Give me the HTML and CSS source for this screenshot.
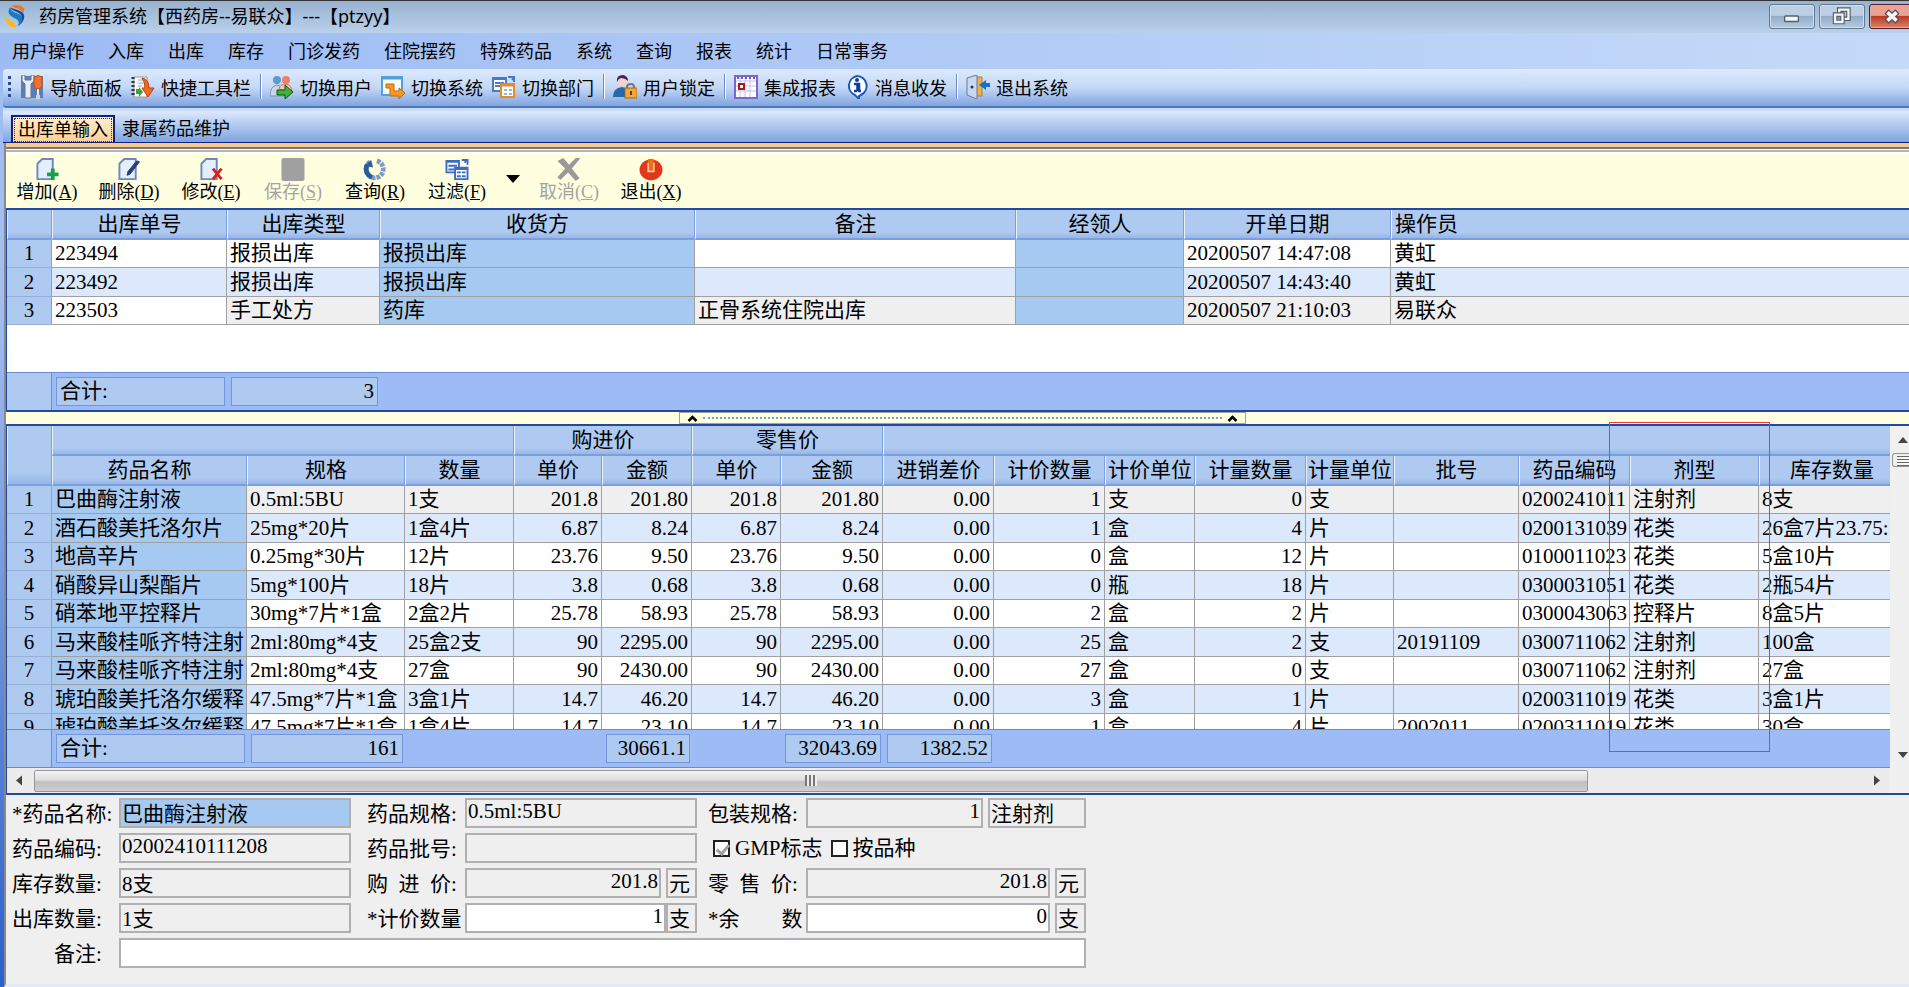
FILE: index.html
```html
<!DOCTYPE html>
<html lang="zh-CN">
<head>
    <meta charset="UTF-8">
    <meta name="viewport" content="width=device-width, initial-scale=1.0">
    <title>药房管理系统</title>
    <link rel="stylesheet" href="styles.css">
</head>
<body>
    <header class="titlebar">
        <svg class="logo" viewBox="0 0 24 28">
            <path d="M7 3C12 0 18 1 22 5l-1 5C17 5 12 4 7 3z" fill="#f07818"/>
            <path d="M6 4c-4 5-1 9 5 12 5 2 6 5 3 9 8-4 9-9 3-13C11 9 7 9 6 4z" fill="#1a78c4"/>
            <path d="M6 4c2 4 8 4 12 8 2 3 2 6 0 9 5-4 5-9 1-12C15 6 10 6 6 4z" fill="#0c4f96"/>
            <path d="M1 13c2 6 12 6 11 13C5 27 0 20 1 13z" fill="#fdb813"/>
        </svg>
        <h1>药房管理系统【西药房--易联众】---【ptzyy】</h1>
        <div class="window-buttons">
            <button type="button" aria-label="最小化">
                <svg viewBox="0 0 46 25"><rect x="15" y="12" width="15" height="6" rx="1" fill="#f4f4f4" stroke="#56606e" stroke-width="1.5"/></svg>
            </button>
            <button type="button" aria-label="还原">
                <svg viewBox="0 0 46 25">
                    <path d="M20 5h10v10H20z" fill="none" stroke="#56606e" stroke-width="5"/>
                    <path d="M20 5h10v10H20z" fill="none" stroke="#f4f4f4" stroke-width="2.5"/>
                    <path d="M15.500 10.500h8v8h-8z" fill="#7f9dbb" stroke="#56606e" stroke-width="5"/>
                    <path d="M15.500 10.500h8v8h-8z" fill="none" stroke="#f4f4f4" stroke-width="2.500"/>
                </svg>
            </button>
            <button type="button" class="close" aria-label="关闭">
                <svg viewBox="0 0 46 25">
                    <path d="M17 7l12 11M29 7L17 18" stroke="#5c4a58" stroke-width="6.500"/>
                    <path d="M18 8l10 9M28 8l-10 9" stroke="#f4f4f4" stroke-width="4"/>
                </svg>
            </button>
        </div>
    </header>

    <nav class="menubar">
        <a href="#">用户操作</a>
        <a href="#">入库</a>
        <a href="#">出库</a>
        <a href="#">库存</a>
        <a href="#">门诊发药</a>
        <a href="#">住院摆药</a>
        <a href="#">特殊药品</a>
        <a href="#">系统</a>
        <a href="#">查询</a>
        <a href="#">报表</a>
        <a href="#">统计</a>
        <a href="#">日常事务</a>
    </nav>

    <div class="toolbar">
        <span class="grip"></span>
        <button type="button">
            <svg viewBox="0 0 24 24">
                <rect x="1" y="1" width="22" height="22" fill="#5b7fb4"/>
                <path d="M2 0v6l3 3v14h6V9l3-3V0h-3v5H5V0z" fill="#e8edf3" stroke="#66748a"/>
                <path d="M14 2q4-3 8 0v9q-1 3-4 3t-4-3z" fill="#f07030" stroke="#c84818"/>
                <path d="M17 14h2v6h-2z" fill="#eee"/><path d="M16 20h4v4h-4z" fill="#ccd4e0"/>
            </svg>
            导航面板
        </button>
        <button type="button">
            <svg viewBox="0 0 24 24">
                <path d="M3 2h13v20H3z" fill="#fbfbfb" stroke="#999"/>
                <path d="M2 2v20" stroke="#333" stroke-width="3" stroke-dasharray="2 2"/>
                <path d="M7 5h6M7 8h6M7 11h4" stroke="#9ab" />
                <path d="M11 3q7 1 7 10h5l-6 9-6-9h3q0-6-3-10z" fill="#f06a20" stroke="#b84410"/>
                <path d="M5 14h3v-2l4 5-4 5v-3H5z" fill="#3fa03c"/>
            </svg>
            快捷工具栏
        </button>
        <span class="sep"></span>
        <button type="button">
            <svg viewBox="0 0 24 24">
                <circle cx="7" cy="5" r="4" fill="#5a9bd0"/><circle cx="16" cy="5" r="4" fill="#ec8068"/>
                <path d="M0 21q0-10 7-11 7 1 7 11z" fill="#c8d8ea" stroke="#7890b0"/>
                <path d="M9 14q1-5 7-5 6 1 6 8z" fill="#f5c8b0" stroke="#c87858"/>
                <path d="M7 15h8v-5l8 7-8 7v-4H7z" fill="#42b03c" stroke="#14500e"/>
            </svg>
            切换用户
        </button>
        <button type="button">
            <svg viewBox="0 0 24 24">
                <rect x="1" y="2" width="20" height="18" fill="#f6fbff" stroke="#52a0dc" stroke-width="2"/>
                <path d="M1 3h20" stroke="#52a0dc" stroke-width="3"/>
                <path d="M5 9h8v7h5v-3l6 5-6 6v-3H9v-8H5z" fill="#f89820" stroke="#c06808"/>
            </svg>
            切换系统
        </button>
        <button type="button">
            <svg viewBox="0 0 24 24">
                <rect x="1" y="3" width="13" height="13" fill="#fff" stroke="#4a78d0" stroke-width="2"/>
                <path d="M1 4h13M3 8h9M3 11h9" stroke="#4a78d0" stroke-width="2"/>
                <path d="M16 2h6v5M20 5l2-3" stroke="#4a78d0" stroke-width="2" fill="none"/>
                <rect x="9" y="9" width="13" height="13" fill="#fff" stroke="#e88a28" stroke-width="2"/>
                <path d="M9 10h13" stroke="#e88a28" stroke-width="3"/>
                <path d="M12 15h8M12 19h8" stroke="#98b8e0" stroke-width="2" stroke-dasharray="3 2"/>
            </svg>
            切换部门
        </button>
        <span class="sep"></span>
        <button type="button">
            <svg viewBox="0 0 24 24">
                <circle cx="9" cy="6" r="5" fill="#f4d4cc"/>
                <path d="M4 7q-1-7 6-7 5 1 5 6-3-3-7-3-3 1-4 4z" fill="#4a2060"/>
                <path d="M0 22q0-9 9-10 8 1 8 10z" fill="#2868a8"/>
                <path d="M14 14v-2q0-3 4-3 3 0 3 3v2" fill="none" stroke="#777" stroke-width="2"/>
                <rect x="12" y="13" width="12" height="10" fill="#f0a838" stroke="#a86810"/>
                <path d="M18 16v4" stroke="#6a3c00" stroke-width="2"/>
            </svg>
            用户锁定
        </button>
        <span class="sep"></span>
        <button type="button">
            <svg viewBox="0 0 24 24">
                <rect x="1" y="1" width="22" height="22" fill="#fff" stroke="#7868d0" stroke-width="2"/>
                <path d="M2 6h20M2 11h20M2 16h20M6 2v20M11 2v20M16 2v20" stroke="#c4c0f0"/>
                <path d="M3 3h18" stroke="#6858c8" stroke-width="2" stroke-dasharray="2 2"/>
                <rect x="5" y="9" width="5" height="5" fill="#fff" stroke="#b01818" stroke-width="2"/>
            </svg>
            集成报表
        </button>
        <button type="button">
            <svg viewBox="0 0 24 24">
                <path d="M12 1a10 10 0 0 1 4 19l-2 1v3l-4-4A10 10 0 0 1 12 1z" fill="#fff" stroke="#1c58b8" stroke-width="2"/>
                <circle cx="12" cy="5" r="2" fill="#123c9c"/>
                <path d="M9 9h5v7h2M9 16h3M12.500 9v7" stroke="#123c9c" stroke-width="2.500" fill="none"/>
            </svg>
            消息收发
        </button>
        <span class="sep"></span>
        <button type="button">
            <svg viewBox="0 0 24 24">
                <path d="M9 2h7v19H9z" fill="#f0b040" stroke="#a88030"/>
                <path d="M1 3l10-3v24L1 20z" fill="#c8d8f0" stroke="#6878a0"/>
                <circle cx="6" cy="12" r="1.500" fill="#334"/>
                <path d="M24 8h-4V5l-7 5 7 5v-3h4z" fill="#1070e0"/>
            </svg>
            退出系统
        </button>
    </div>

    <div class="tabs">
        <button type="button" class="tab active"><span>出库单输入</span></button>
        <button type="button" class="tab">隶属药品维护</button>
    </div>

    <main class="workspace">
        <div class="actions">
            <button type="button">
                <svg viewBox="0 0 24 24">
                    <path d="M2 6l5-5h11v21H2z" fill="#e4eefc" stroke="#6c88bc" stroke-width="2"/>
                    <path d="M12 17h12M18 11v12" stroke="#18a04c" stroke-width="4"/>
                </svg>
                <span>增加(<u>A</u>)</span>
            </button>
            <button type="button">
                <svg viewBox="0 0 24 24">
                    <path d="M2 6l5-5h12v21H2z" fill="#e4eefc" stroke="#6c88bc" stroke-width="2"/>
                    <path d="M23 4L13 17l-3 1 1-4L20 3z" fill="#2c3c78" stroke="#2c3c78"/>
                </svg>
                <span>删除(<u>D</u>)</span>
            </button>
            <button type="button">
                <svg viewBox="0 0 24 24">
                    <path d="M2 6l5-5h11v21H2z" fill="#e4eefc" stroke="#6c88bc" stroke-width="2"/>
                    <path d="M14 11l9 11M23 11l-9 11" stroke="#d82020" stroke-width="3"/>
                </svg>
                <span>修改(<u>E</u>)</span>
            </button>
            <button type="button" disabled>
                <svg viewBox="0 0 24 24"><rect x="0" y="0" width="24" height="24" rx="2" fill="#a0a0a0"/></svg>
                <span>保存(<u>S</u>)</span>
            </button>
            <button type="button">
                <svg viewBox="0 0 24 24">
                    <path d="M7 4a9 9 0 1 0 7-1" fill="none" stroke="#7c9cc8" stroke-width="5" stroke-dasharray="4 1"/>
                    <path d="M4 7a9 9 0 0 0 5 13" fill="none" stroke="#2c5c9c" stroke-width="5"/>
                    <path d="M1 8l7-6 2 8z" fill="#2c5c9c"/>
                </svg>
                <span>查询(<u>R</u>)</span>
            </button>
            <button type="button">
                <svg viewBox="0 0 24 24">
                    <path d="M1 3h13v12H1z" fill="#fff" stroke="#3c6cc8" stroke-width="2"/>
                    <path d="M1 4h13M3 8h9M3 12h6" stroke="#3c6cc8" stroke-width="2"/>
                    <path d="M17 2h6v5M20 5l2-3" stroke="#3c6cc8" stroke-width="2" fill="none"/>
                    <path d="M10 10h13v12H10z" fill="#fff" stroke="#3c6cc8" stroke-width="2"/>
                    <path d="M10 11h13" stroke="#3c6cc8" stroke-width="3"/>
                    <path d="M12 15h9M12 19h9" stroke="#3c6cc8" stroke-width="2" stroke-dasharray="4 1"/>
                </svg>
                <span>过滤(<u>F</u>)</span>
            </button>
            <button type="button" class="more" aria-label="更多过滤">
                <svg viewBox="0 0 14 8"><path d="M0 0h14L7 8z" fill="#000"/></svg>
            </button>
            <button type="button" disabled>
                <svg viewBox="0 0 24 24"><path d="M0 3l6-3 6 7 7-7h5l-9 11 8 10-4 3-8-9-8 8-3-3 8-9z" fill="#999"/></svg>
                <span>取消(<u>C</u>)</span>
            </button>
            <button type="button">
                <svg viewBox="0 0 24 24">
                    <path d="M8 2A12 11 0 1 0 16 2z" fill="#e03818"/>
                    <path d="M9 1h6v13H9z" fill="#f07010"/>
                    <path d="M9 5v9h6V5" fill="none" stroke="#fbd8c8" stroke-width="1.500"/>
                </svg>
                <span>退出(<u>X</u>)</span>
            </button>
        </div>

        <section class="grid-panel orders">
            <div class="grid-body">
                <table class="grid">
                    <colgroup>
                        <col class="w45"><col class="w175"><col class="w153"><col class="w315"><col class="w321"><col class="w168"><col class="w207"><col>
                    </colgroup>
                    <thead>
                        <tr><th></th><th>出库单号</th><th>出库类型</th><th>收货方</th><th>备注</th><th>经领人</th><th>开单日期</th><th class="left">操作员</th></tr>
                    </thead>
                    <tbody>
                        <tr><th>1</th><td>223494</td><td>报损出库</td><td class="key">报损出库</td><td></td><td class="key"></td><td>20200507 14:47:08</td><td>黄虹</td></tr>
                        <tr><th>2</th><td>223492</td><td>报损出库</td><td class="key">报损出库</td><td></td><td class="key"></td><td>20200507 14:43:40</td><td>黄虹</td></tr>
                        <tr class="current"><th>3</th><td class="edit">223503</td><td>手工处方</td><td class="key">药库</td><td>正骨系统住院出库</td><td class="key"></td><td>20200507 21:10:03</td><td>易联众</td></tr>
                    </tbody>
                </table>
            </div>
            <div class="totals">
                <span class="corner w45"></span>
                <span class="total w175"><b>合计:</b></span>
                <span class="total num w153"><b>3</b></span>
            </div>
        </section>

        <div class="splitter">
            <button type="button" aria-label="折叠">
                <svg viewBox="0 0 10 7"><path d="M1 6l4-4 4 4" fill="none" stroke="#000" stroke-width="2.500"/></svg>
                <i></i>
                <svg viewBox="0 0 10 7"><path d="M1 6l4-4 4 4" fill="none" stroke="#000" stroke-width="2.500"/></svg>
            </button>
        </div>

        <section class="grid-panel details">
            <div class="details-main">
                <div class="grid-body">
                    <table class="grid">
                        <colgroup>
                            <col class="w45"><col class="w195"><col class="w158"><col class="w109"><col class="w88"><col class="w90"><col class="w89"><col class="w102"><col class="w111"><col class="w111"><col class="w90"><col class="w111"><col class="w88"><col class="w125"><col class="w111"><col class="w129"><col>
                        </colgroup>
                        <thead>
                            <tr><th rowspan="2"></th><th colspan="3"></th><th colspan="2">购进价</th><th colspan="2">零售价</th><th colspan="9"></th></tr>
                            <tr><th>药品名称</th><th>规格</th><th>数量</th><th>单价</th><th>金额</th><th>单价</th><th>金额</th><th>进销差价</th><th>计价数量</th><th>计价单位</th><th>计量数量</th><th>计量单位</th><th>批号</th><th>药品编码</th><th>剂型</th><th class="partial">库存数量</th></tr>
                        </thead>
                        <tbody>
                            <tr class="current"><th>1</th><td class="key">巴曲酶注射液</td><td>0.5ml:5BU</td><td>1支</td><td class="num">201.8</td><td class="num">201.80</td><td class="num">201.8</td><td class="num">201.80</td><td class="num">0.00</td><td class="num">1</td><td>支</td><td class="num">0</td><td>支</td><td></td><td>0200241011</td><td>注射剂</td><td>8支</td></tr>
                            <tr><th>2</th><td class="key">酒石酸美托洛尔片</td><td>25mg*20片</td><td>1盒4片</td><td class="num">6.87</td><td class="num">8.24</td><td class="num">6.87</td><td class="num">8.24</td><td class="num">0.00</td><td class="num">1</td><td>盒</td><td class="num">4</td><td>片</td><td></td><td>0200131039</td><td>花类</td><td>26盒7片23.75:</td></tr>
                            <tr><th>3</th><td class="key">地高辛片</td><td>0.25mg*30片</td><td>12片</td><td class="num">23.76</td><td class="num">9.50</td><td class="num">23.76</td><td class="num">9.50</td><td class="num">0.00</td><td class="num">0</td><td>盒</td><td class="num">12</td><td>片</td><td></td><td>0100011023</td><td>花类</td><td>5盒10片</td></tr>
                            <tr><th>4</th><td class="key">硝酸异山梨酯片</td><td>5mg*100片</td><td>18片</td><td class="num">3.8</td><td class="num">0.68</td><td class="num">3.8</td><td class="num">0.68</td><td class="num">0.00</td><td class="num">0</td><td>瓶</td><td class="num">18</td><td>片</td><td></td><td>0300031051</td><td>花类</td><td>2瓶54片</td></tr>
                            <tr><th>5</th><td class="key">硝苯地平控释片</td><td>30mg*7片*1盒</td><td>2盒2片</td><td class="num">25.78</td><td class="num">58.93</td><td class="num">25.78</td><td class="num">58.93</td><td class="num">0.00</td><td class="num">2</td><td>盒</td><td class="num">2</td><td>片</td><td></td><td>0300043063</td><td>控释片</td><td>8盒5片</td></tr>
                            <tr><th>6</th><td class="key">马来酸桂哌齐特注射</td><td>2ml:80mg*4支</td><td>25盒2支</td><td class="num">90</td><td class="num">2295.00</td><td class="num">90</td><td class="num">2295.00</td><td class="num">0.00</td><td class="num">25</td><td>盒</td><td class="num">2</td><td>支</td><td>20191109</td><td>0300711062</td><td>注射剂</td><td>100盒</td></tr>
                            <tr><th>7</th><td class="key">马来酸桂哌齐特注射</td><td>2ml:80mg*4支</td><td>27盒</td><td class="num">90</td><td class="num">2430.00</td><td class="num">90</td><td class="num">2430.00</td><td class="num">0.00</td><td class="num">27</td><td>盒</td><td class="num">0</td><td>支</td><td></td><td>0300711062</td><td>注射剂</td><td>27盒</td></tr>
                            <tr><th>8</th><td class="key">琥珀酸美托洛尔缓释</td><td>47.5mg*7片*1盒</td><td>3盒1片</td><td class="num">14.7</td><td class="num">46.20</td><td class="num">14.7</td><td class="num">46.20</td><td class="num">0.00</td><td class="num">3</td><td>盒</td><td class="num">1</td><td>片</td><td></td><td>0200311019</td><td>花类</td><td>3盒1片</td></tr>
                            <tr><th>9</th><td class="key">琥珀酸美托洛尔缓释</td><td>47.5mg*7片*1盒</td><td>1盒4片</td><td class="num">14.7</td><td class="num">23.10</td><td class="num">14.7</td><td class="num">23.10</td><td class="num">0.00</td><td class="num">1</td><td>盒</td><td class="num">4</td><td>片</td><td>2002011</td><td>0200311019</td><td>花类</td><td>30盒</td></tr>
                        </tbody>
                    </table>
                </div>
                <div class="totals">
                    <span class="corner w45"></span>
                    <span class="total w195"><b>合计:</b></span>
                    <span class="total num w158"><b>161</b></span>
                    <span class="w109"></span>
                    <span class="w88"></span>
                    <span class="total num w90"><b>30661.1</b></span>
                    <span class="w89"></span>
                    <span class="total num w102"><b>32043.69</b></span>
                    <span class="total num w111"><b>1382.52</b></span>
                </div>
                <div class="hscroll">
                    <svg viewBox="0 0 6 10"><path d="M6 0v10L0 5z" fill="#444"/></svg>
                    <div class="track"><div class="thumb"><i></i></div></div>
                    <svg viewBox="0 0 6 10"><path d="M0 0v10l6-5z" fill="#444"/></svg>
                </div>
            </div>
            <div class="vscroll">
                <svg viewBox="0 0 10 6"><path d="M0 6h10L5 0z" fill="#444"/></svg>
                <div class="thumb"></div>
                <svg viewBox="0 0 10 6"><path d="M0 0h10L5 6z" fill="#444"/></svg>
            </div>
            <div class="marker"></div>
        </section>

        <form class="editor">
            <label for="name">*药品名称:</label>
            <input id="name" class="key" value="巴曲酶注射液">
            <label for="spec" class="second">药品规格:</label>
            <input id="spec" value="0.5ml:5BU" readonly>
            <label for="pack" class="third">包装规格:</label>
            <div class="pair">
                <input id="pack" class="num" value="1" readonly>
                <input class="form-type" value="注射剂" aria-label="剂型" readonly>
            </div>

            <label for="code">药品编码:</label>
            <input id="code" value="02002410111208" readonly>
            <label for="batch" class="second">药品批号:</label>
            <input id="batch" value="" readonly>
            <div class="checks">
                <input type="checkbox" id="gmp" checked disabled><label for="gmp">GMP标志</label>
                <input type="checkbox" id="kind"><label for="kind">按品种</label>
            </div>

            <label for="stock">库存数量:</label>
            <input id="stock" value="8支" readonly>
            <label for="buy" class="second">购&ensp;进&ensp;价:</label>
            <div class="pair">
                <input id="buy" class="num" value="201.8" readonly>
                <input class="unit" value="元" aria-label="单位" readonly>
            </div>
            <label for="sell" class="third">零&ensp;售&ensp;价:</label>
            <div class="pair">
                <input id="sell" class="num" value="201.8" readonly>
                <input class="unit" value="元" aria-label="单位" readonly>
            </div>

            <label for="out">出库数量:</label>
            <input id="out" value="1支" readonly>
            <label for="qty" class="second">*计价数量</label>
            <div class="pair joined">
                <input id="qty" class="num" value="1">
                <input class="unit" value="支" aria-label="单位" readonly>
            </div>
            <label for="rest" class="third">*余&emsp;&emsp;数</label>
            <div class="pair">
                <input id="rest" class="num" value="0">
                <input class="unit" value="支" aria-label="单位" readonly>
            </div>

            <label for="memo" class="indent">备注:</label>
            <input id="memo" class="wide" value="">
        </form>
    </main>
</body>
</html>
```

FILE: styles.css
```css
:root {
    --song: "Liberation Serif", "Noto Sans CJK SC", serif;
    --ui: "Noto Sans", "Noto Sans CJK SC", sans-serif;
    --navy: #2348a0;
    --head: #aecaf0;
    --foot: #9dbbf4;
    --key: #a5c9f0;
    --line: #a0a0a0;
    --face: #efefef;
}

* {
    box-sizing: border-box;
    margin: 0;
    padding: 0;
}

body {
    min-height: 100vh;
    display: flex;
    flex-direction: column;
    overflow-x: hidden;
    font-family: var(--song);
    font-size: 21px;
    color: #000;
    background: linear-gradient(#9dbbf4, #a4c0f2 30%, #2a60cc);
}

button {
    font: inherit;
    color: inherit;
    background: none;
    border: none;
    white-space: nowrap;
}

/* title bar */
.titlebar {
    display: flex;
    align-items: center;
    height: 33px;
    padding: 0 0 2px 4px;
    border-top: 1px solid #333;
    background: linear-gradient(#98b2d0, #b9d1ea);
    font-family: var(--ui);
}

.logo {
    width: 23px;
    height: 25px;
}

.titlebar h1 {
    flex: 1;
    margin-left: 12px;
    font-size: 18px;
    font-weight: normal;
    line-height: 28px;
}

.window-buttons {
    display: flex;
    gap: 4px;
    margin-right: -6px;
    height: 25px;
}

.window-buttons button {
    width: 46px;
    height: 25px;
    border: 1px solid #64788f;
    border-radius: 3px;
    box-shadow: inset 0 0 0 1px #d0deec;
    background: linear-gradient(#bccfe4 45%, #93adc9 50%, #b4cbe2);
}

.window-buttons .close {
    border-color: #55182a;
    box-shadow: inset 0 0 0 1px #e8aca0;
    background: linear-gradient(#e6a396 45%, #bc3b20 50%, #d88468);
}

.window-buttons svg {
    display: block;
    width: 44px;
    height: 23px;
}

/* menu */
.menubar {
    display: flex;
    align-items: center;
    gap: 24px;
    height: 36px;
    padding: 0 0 2px 12px;
    background: linear-gradient(90deg, #9dbbf4, #c4daf9);
    font-family: var(--ui);
    font-size: 18px;
}

.menubar a {
    color: #000;
    text-decoration: none;
}

/* toolbar */
.toolbar {
    display: flex;
    align-items: center;
    gap: 9px;
    height: 39px;
    margin-left: 3px;
    padding: 0 0 2px 5px;
    border-bottom: 2px solid #5078b8;
    border-radius: 4px 0 0 4px;
    background: linear-gradient(#dceafd, #c4d8f6 50%, #80a5e0);
    font-family: var(--ui);
    font-size: 18px;
}

.toolbar button {
    display: flex;
    align-items: center;
    gap: 6px;
}

.toolbar svg {
    width: 24px;
    height: 24px;
}

.grip {
    width: 3px;
    height: 22px;
    background: repeating-linear-gradient(#2c4c8c 0 3px, transparent 3px 6px);
}

.sep {
    width: 1px;
    height: 25px;
    background: #6c8cc8;
    box-shadow: 1px 0 #fff;
}

/* tabs */
.tabs {
    display: flex;
    align-items: flex-end;
    height: 35px;
    margin-left: 3px;
    padding-left: 8px;
    border-top: 3px solid #c8dcf8;
    border-bottom: 1px solid #102080;
    background: linear-gradient(#dceafd, #7fa4e0);
    font-size: 18px;
}

.tab {
    height: 27px;
    padding: 0 7px;
    line-height: 29px;
}

.tab.active {
    padding: 1px 1px 0;
    border: 2px solid #102080;
    border-bottom: none;
    background: linear-gradient(#ffefd0, #ffcf90);
}

.tab.active span {
    display: block;
    padding: 0 3px;
    border: 1px dotted #333;
    line-height: 22px;
}

/* workspace */
.workspace {
    flex: 1;
    margin-left: 4px;
    border-left: 2px solid #888;
    background: var(--face);
    border-bottom: 3px solid #e2e8f6;
}

.actions {
    display: flex;
    height: 65px;
    padding-top: 5px;
    border-top: 4px solid #fcc98c;
    background: linear-gradient(#777 2px, #fff 2px 3px, #b4b4b4 3px 5px, #fff 5px 7px, #ffffe0 7px);
    font-size: 18px;
}

.actions button {
    display: flex;
    flex-direction: column;
    align-items: center;
    width: 82px;
    padding-top: 6px;
    line-height: 22px;
}

.actions svg {
    width: 24px;
    height: 23px;
}

.actions button:disabled {
    color: #a4a4a4;
}

.actions .more {
    width: 30px;
    padding-top: 23px;
}

.actions .more svg {
    width: 14px;
    height: 8px;
}

/* grids */
.grid-panel {
    border: 2px solid var(--navy);
    border-width: 2px 0 2px 1px;
    background: #fff;
}

.grid-body {
    overflow: hidden;
}

.orders .grid-body {
    height: 162px;
}

.details .grid-body {
    height: 303px;
}

.grid {
    width: 100%;
    table-layout: fixed;
    border-collapse: separate;
    border-spacing: 0;
    line-height: 27px;
    white-space: nowrap;
}

.grid th {
    overflow: hidden;
    font-weight: normal;
    background: var(--head);
}

.grid thead th {
    height: 30px;
    padding-top: 1px;
    border-bottom: 2px solid #7c9edc;
    border-left: 1px solid #e8f1fd;
    border-right: 1px solid #7c9edc;
    background: linear-gradient(var(--head) 80%, #96b6e8);
}

.grid thead .left {
    padding-left: 3px;
    text-align: left;
}

/* column runs on past the scroll bar */
.grid thead .partial {
    padding-left: 14px;
}

.grid tbody th {
    border-right: 1px solid var(--line);
    border-bottom: 1px solid #98b0d8;
}

.grid td {
    overflow: hidden;
    padding: 0 3px;
    border-right: 1px solid var(--line);
    border-bottom: 1px solid var(--line);
}

.grid tr > :last-child {
    border-right: none;
}

.grid tbody tr:nth-child(even) {
    line-height: 28px;
    background: #dce9fc;
}

.grid tbody .current {
    background: var(--face);
}

.grid .edit {
    background: #fff;
}

.grid tbody .key {
    background: var(--key);
}

.num {
    text-align: right;
}

.totals {
    display: flex;
    height: 38px;
    border-top: 1px solid #6c8cd0;
    background: var(--foot);
}

.totals span {
    flex: none;
}

.totals .corner {
    border-right: 1px solid #6c8cd0;
    background: var(--head);
}

.total {
    padding: 4px 2px 4px 4px;
}

.total b {
    display: block;
    padding: 0 3px;
    border: 1px solid #7496d8;
    background: var(--head);
    font-weight: normal;
    line-height: 27px;
}

.w45 { width: 45px; }
.w88 { width: 88px; }
.w89 { width: 89px; }
.w90 { width: 90px; }
.w102 { width: 102px; }
.w109 { width: 109px; }
.w111 { width: 111px; }
.w125 { width: 125px; }
.w129 { width: 129px; }
.w153 { width: 153px; }
.w158 { width: 158px; }
.w168 { width: 168px; }
.w175 { width: 175px; }
.w195 { width: 195px; }
.w207 { width: 207px; }
.w315 { width: 315px; }
.w321 { width: 321px; }

/* splitter */
.splitter {
    display: flex;
    justify-content: center;
    height: 12px;
    padding-left: 10px;
    background: #ffffe0;
}

.splitter button {
    display: flex;
    align-items: center;
    gap: 5px;
    width: 30%;
    padding: 0 7px;
    border: 1px solid var(--line);
}

.splitter i {
    flex: 1;
    border-top: 2px dotted #68a8e0;
}

.splitter svg {
    width: 11px;
    height: 7px;
}

/* detail grid and its scroll bars */
.details {
    position: relative;
    display: flex;
}

.details-main {
    flex: 1;
    min-width: 0;
}

.hscroll {
    display: flex;
    align-items: center;
    gap: 12px;
    height: 26px;
    padding: 0 10px 0 9px;
    border-top: 1px solid #6c8cd0;
    background: #ececec;
}

.hscroll svg {
    width: 6px;
    height: 11px;
}

.hscroll .track {
    flex: 1;
}

.hscroll .thumb {
    display: flex;
    justify-content: center;
    align-items: center;
    width: 85%;
    height: 22px;
    border: 1px solid #979797;
    border-radius: 2px;
    background: linear-gradient(#f4f4f4, #dcdcdc 45%, #c0c0c4 55%, #cfcfcf);
}

.hscroll .thumb i {
    width: 12px;
    height: 11px;
    background: repeating-linear-gradient(90deg, #777 0 2px, #eee 2px 4px);
}

.vscroll {
    display: flex;
    flex-direction: column;
    align-items: flex-end;
    width: 19px;
    padding: 11px 1px 35px;
    overflow: hidden;
    background: #f0f0f0;
}

.vscroll svg {
    width: 10px;
    height: 6px;
}

.vscroll .thumb {
    width: 17px;
    height: 14px;
    margin: 10px -1px auto 0;
    border: 1px solid #979797;
    border-right: none;
    border-radius: 3px 0 0 3px;
    background: repeating-linear-gradient(#666 0 1px, #f8f8f8 1px 3px) 4px 2px / 12px 10px no-repeat;
}

.marker {
    position: absolute;
    top: -4px;
    right: 139px;
    width: 161px;
    height: 330px;
    border: 1px solid #f03838;
    pointer-events: none;
}

/* editor form */
.editor {
    display: grid;
    grid-template-columns: 107px 232px 114px 232px 109px 280px;
    grid-auto-rows: 30px;
    row-gap: 5px;
    padding: 3px 0 16px 6px;
}

.editor label {
    line-height: 32px;
    white-space: pre;
}

.editor .second {
    padding-left: 16px;
}

.editor .third {
    padding-left: 11px;
}

.editor .indent {
    padding-left: 42px;
}

.editor input {
    width: 100%;
    min-width: 0;
    height: 30px;
    padding: 0 1px 3px;
    border: 2px solid #b0b0b0;
    font: inherit;
    color: #000;
    background: #fff;
}

.editor input:read-only {
    background: var(--face);
}

.editor .key {
    background: var(--key);
}

.pair {
    display: flex;
    gap: 5px;
}

.pair.joined {
    gap: 0;
}

.editor .unit {
    flex: none;
    width: 31px;
}

.editor .form-type {
    flex: none;
    width: 98px;
}

.checks {
    grid-column: span 2;
    display: flex;
    align-items: center;
    padding-left: 16px;
}

.editor .checks input {
    appearance: none;
    position: relative;
    width: 17px;
    height: 17px;
    padding: 0;
    border: 2px solid #222;
    background: #fff;
}

.checks input:checked::after {
    content: "";
    position: absolute;
    left: 4px;
    top: 0;
    width: 5px;
    height: 10px;
    border: solid #a0a0a0;
    border-width: 0 3px 3px 0;
    transform: rotate(40deg);
}

.editor .checks label {
    padding: 0 8px 0 5px;
    line-height: 28px;
}

.editor .wide {
    grid-column: span 5;
}
```
